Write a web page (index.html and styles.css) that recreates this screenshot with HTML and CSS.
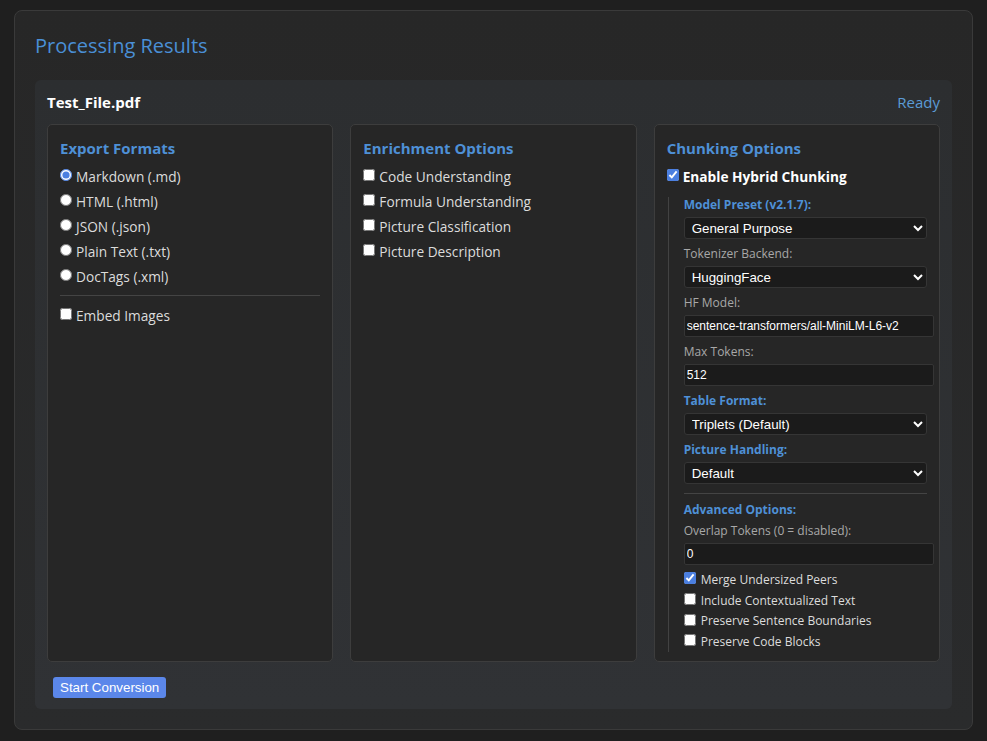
FILE: index.html
```html
<!DOCTYPE html>
<html lang="en">
<head>
<meta charset="utf-8">
<title>Processing Results</title>
<link rel="stylesheet" href="styles.css">
</head>
<body>
<div class="card">
  <h2 class="title">Processing Results</h2>
  <div class="panel">
    <div class="panel-head">
      <span class="file-name">Test_File.pdf</span>
      <span class="status">Ready</span>
    </div>
    <div class="columns">
      <div class="col">
        <h3 class="col-title">Export Formats</h3>
        <label class="opt"><input type="radio" name="fmt" checked> Markdown (.md)</label>
        <label class="opt"><input type="radio" name="fmt"> HTML (.html)</label>
        <label class="opt"><input type="radio" name="fmt"> JSON (.json)</label>
        <label class="opt"><input type="radio" name="fmt"> Plain Text (.txt)</label>
        <label class="opt"><input type="radio" name="fmt"> DocTags (.xml)</label>
        <hr class="sep">
        <label class="opt"><input type="checkbox"> Embed Images</label>
      </div>
      <div class="col">
        <h3 class="col-title">Enrichment Options</h3>
        <label class="opt"><input type="checkbox"> Code Understanding</label>
        <label class="opt"><input type="checkbox"> Formula Understanding</label>
        <label class="opt"><input type="checkbox"> Picture Classification</label>
        <label class="opt"><input type="checkbox"> Picture Description</label>
      </div>
      <div class="col">
        <h3 class="col-title">Chunking Options</h3>
        <label class="opt opt-strong"><input type="checkbox" checked> Enable Hybrid Chunking</label>
        <div class="sub">
          <div class="field">
            <div class="lbl lbl-accent">Model Preset (v2.1.7):</div>
            <select class="ctl"><option>General Purpose</option></select>
          </div>
          <div class="field">
            <div class="lbl">Tokenizer Backend:</div>
            <select class="ctl"><option>HuggingFace</option></select>
          </div>
          <div class="field">
            <div class="lbl">HF Model:</div>
            <input class="ctl txt" type="text" value="sentence-transformers/all-MiniLM-L6-v2">
          </div>
          <div class="field">
            <div class="lbl">Max Tokens:</div>
            <input class="ctl txt" type="text" value="512">
          </div>
          <div class="field">
            <div class="lbl lbl-accent">Table Format:</div>
            <select class="ctl"><option>Triplets (Default)</option></select>
          </div>
          <div class="field field-last">
            <div class="lbl lbl-accent">Picture Handling:</div>
            <select class="ctl"><option>Default</option></select>
          </div>
          <hr class="sep sep-sub">
          <div class="lbl lbl-accent">Advanced Options:</div>
          <div class="field field-tight">
            <div class="lbl">Overlap Tokens (0 = disabled):</div>
            <input class="ctl txt" type="text" value="0">
          </div>
          <div class="small-opts">
            <label class="sopt"><input type="checkbox" checked> Merge Undersized Peers</label>
            <label class="sopt"><input type="checkbox"> Include Contextualized Text</label>
            <label class="sopt"><input type="checkbox"> Preserve Sentence Boundaries</label>
            <label class="sopt"><input type="checkbox"> Preserve Code Blocks</label>
          </div>
        </div>
      </div>
    </div>
    <div class="actions">
      <button class="btn" type="button">Start Conversion</button>
    </div>
  </div>
</div>
</body>
</html>
```

FILE: styles.css
```css
* { box-sizing: border-box; }

html, body { height: 100%; }

body {
  margin: 0;
  padding: 10px 14px 12px;
  background: #1f1f1f;
  font-family: "Open Sans", "Noto Sans", sans-serif;
  color: #e0e0e0;
}

.card {
  border: 1px solid #3a3a3a;
  border-radius: 8px;
  background: linear-gradient(180deg, #272727 0%, #2a2b2c 100%);
  padding: 21px 20px 20px;
}

.title {
  margin: 0 0 20px;
  font-size: 20px;
  line-height: 28px;
  font-weight: 400;
  color: #4a8fd6;
}

.panel {
  background: linear-gradient(180deg, #2c2e30 0%, #303235 100%);
  border-radius: 6px;
  padding: 12px 12px 11px;
}

.panel-head {
  display: flex;
  justify-content: space-between;
  align-items: center;
  height: 20px;
  margin-bottom: 12px;
}

.file-name {
  font-size: 15px;
  font-weight: 700;
  color: #ffffff;
}

.status {
  font-size: 15px;
  color: #5b9bd5;
}

.columns {
  display: grid;
  grid-template-columns: 1fr 1fr 1fr;
  gap: 17px;
}

.col {
  background: #262626;
  border: 1px solid #3d3d3d;
  border-radius: 5px;
  padding: 12px 12px 9px;
}

.col-title {
  margin: 0 0 5px;
  font-size: 15px;
  line-height: 22px;
  font-weight: 700;
  color: #4e90d6;
}

.opt {
  display: flex;
  align-items: center;
  height: 25px;
  font-size: 13.7px;
  color: #dcdcdc;
  white-space: nowrap;
}

.opt input {
  margin: 0 4px 3px 0;
  width: 12px;
  height: 12px;
  accent-color: #4b7fe0;
}

.opt-strong {
  font-weight: 700;
  color: #ffffff;
}

.sep {
  border: 0;
  border-top: 1px solid #444;
  margin: 6px 0 7px;
}

.sub {
  margin: 8px 0 0 1px;
  border-left: 1px solid #424242;
  padding-left: 15px;
}

.field { margin-bottom: 7px; }
.field-last { margin-bottom: 0; }
.field-tight { margin-top: 5px; margin-bottom: 4px; }

.lbl {
  font-size: 12px;
  line-height: 16px;
  color: #a8a8a8;
  margin-bottom: 4px;
  white-space: nowrap;
}

.lbl-accent {
  color: #4e90d6;
  font-weight: 700;
}

.ctl {
  display: block;
  font-family: "Liberation Sans", Arial, sans-serif;
  font-size: 13.33px;
  color: #ffffff;
  background: #1b1b1b;
  border: 1px solid #353535;
  border-radius: 3px;
}

select.ctl {
  width: 100%;
  height: 22px;
  padding: 0 2px 0 3px;
  color-scheme: dark;
}

.txt {
  box-sizing: content-box;
  width: 100%;
  height: 14px;
  padding: 3px 3px 3px 2px;
  border-radius: 2px;
  outline: none;
  font-size: 12px;
  line-height: 14px;
}

.sep-sub {
  margin: 9px 0 8px;
}

.small-opts {
  display: flex;
  flex-direction: column;
}

.sopt {
  display: flex;
  align-items: center;
  height: 20.7px;
  font-size: 12px;
  color: #dcdcdc;
  white-space: nowrap;
}

.sopt input {
  margin: 0 5px 2px 0;
  width: 12px;
  height: 12px;
  accent-color: #4b7fe0;
}

.actions {
  display: flex;
  margin-top: 15px;
  padding-left: 6px;
}

.btn {
  display: block;
  font-family: "Liberation Sans", Arial, sans-serif;
  font-size: 13.33px;
  height: 21px;
  padding: 0 7px;
  color: #ffffff;
  background: #5b87ea;
  border: 0;
  border-radius: 3px;
}
```
